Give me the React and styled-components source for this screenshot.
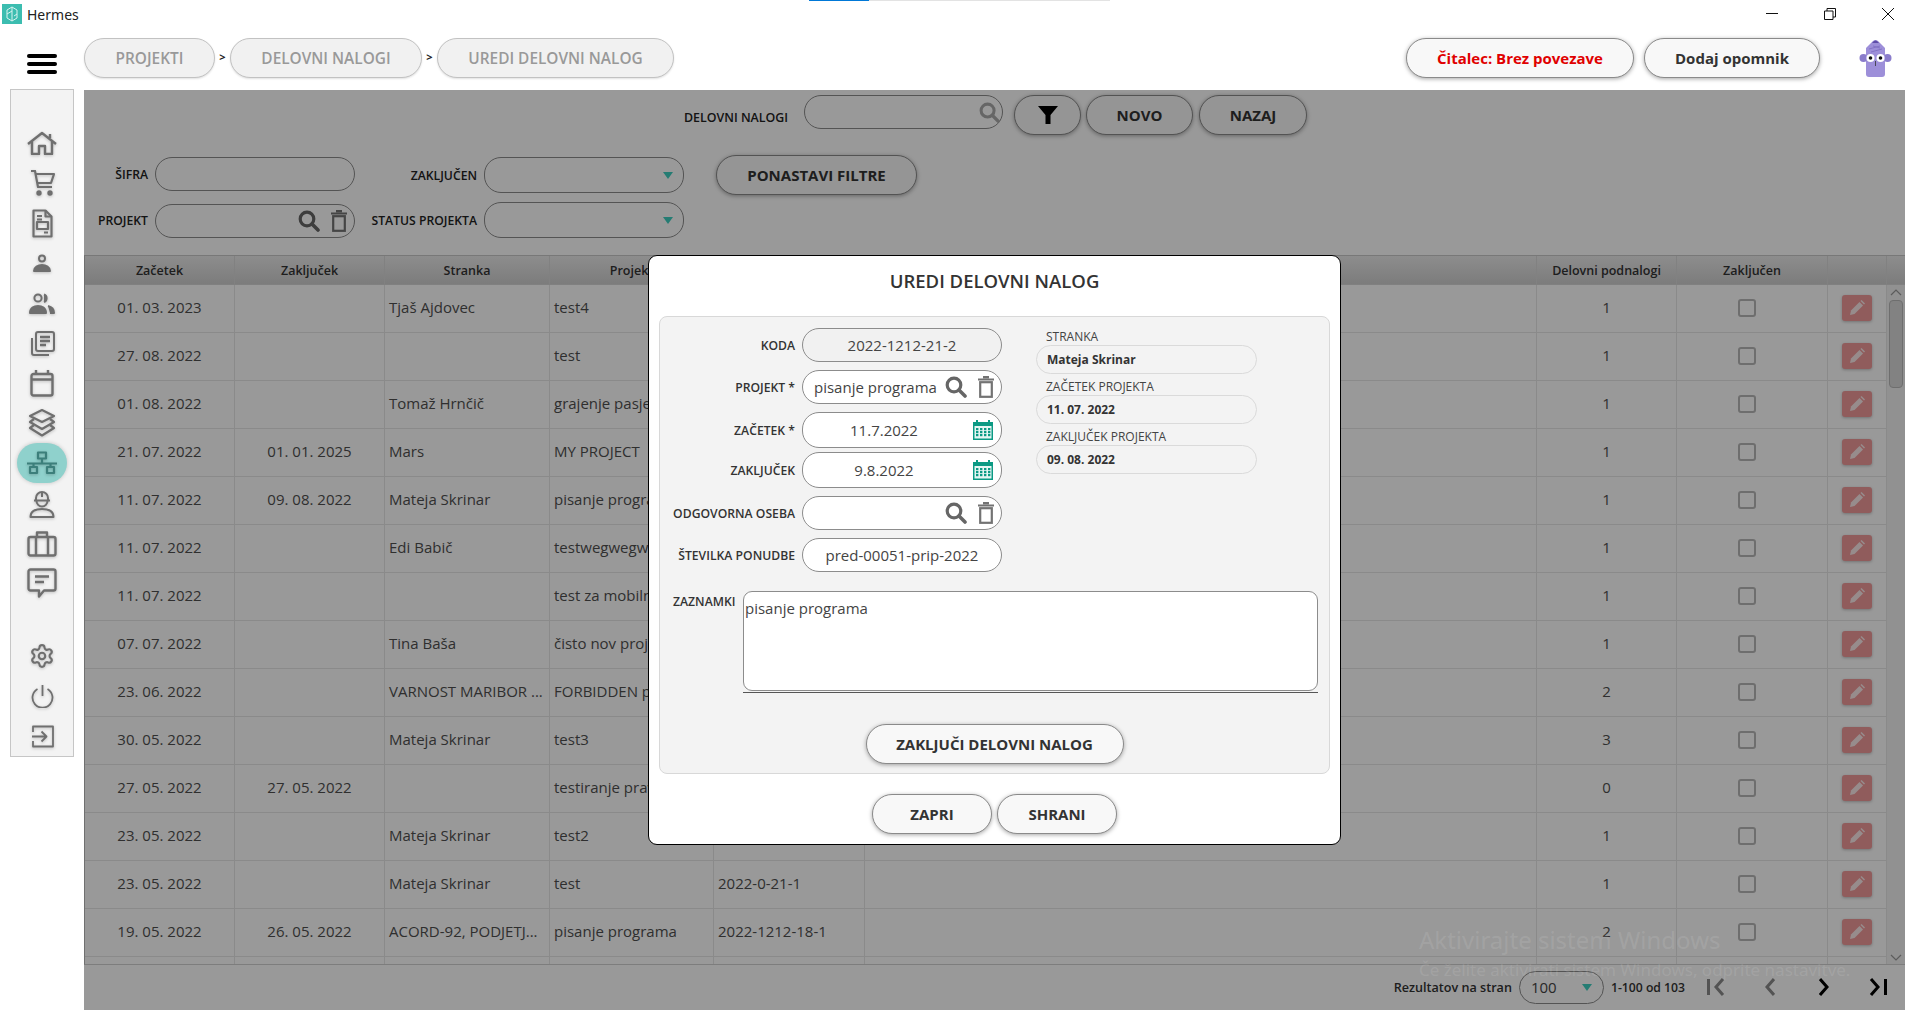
import React from 'react';
import styled, { createGlobalStyle } from 'styled-components';
import { Settings } from 'lucide-react';

const GlobalStyle = createGlobalStyle`
  html, body { margin: 0; padding: 0; background: #fff; }
  body { font-family: "Open Sans", "Noto Sans", sans-serif; color: #444; }
  * { box-sizing: border-box; }
`;

const COLS = '150px 150px 165px 164px 151px 672px 140px 151px 59px';

const rows = [
  ['01. 03. 2023', '', 'Tjaš Ajdovec', 'test4', '', 1],
  ['27. 08. 2022', '', '', 'test', '', 1],
  ['01. 08. 2022', '', 'Tomaž Hrnčič', 'grajenje pasje hiše', '', 1],
  ['21. 07. 2022', '01. 01. 2025', 'Mars', 'MY PROJECT', '', 1],
  ['11. 07. 2022', '09. 08. 2022', 'Mateja Skrinar', 'pisanje programa', '', 1],
  ['11. 07. 2022', '', 'Edi Babič', 'testwegwegwg', '', 1],
  ['11. 07. 2022', '', '', 'test za mobilno', '', 1],
  ['07. 07. 2022', '', 'Tina Baša', 'čisto nov projekt', '', 1],
  ['23. 06. 2022', '', 'VARNOST MARIBOR ...', 'FORBIDDEN project', '', 2],
  ['30. 05. 2022', '', 'Mateja Skrinar', 'test3', '', 3],
  ['27. 05. 2022', '27. 05. 2022', '', 'testiranje prava', '', 0],
  ['23. 05. 2022', '', 'Mateja Skrinar', 'test2', '', 1],
  ['23. 05. 2022', '', 'Mateja Skrinar', 'test', '2022-0-21-1', 1],
  ['19. 05. 2022', '26. 05. 2022', 'ACORD-92, PODJETJ...', 'pisanje programa', '2022-1212-18-1', 2],
  ['', '', '', '', '', ''],
];

const Page = styled.div`
  position: relative;
  width: 1920px;
  height: 1030px;
  overflow: hidden;
`;

const LoadBar = styled.div`
  position: absolute;
  top: 0;
  left: 809px;
  width: 301px;
  height: 1px;
  background: #e3e3e3;
  &::before {
    content: '';
    display: block;
    width: 60px;
    height: 1px;
    background: #0078d7;
  }
`;

const TitleBar = styled.div`
  display: flex;
  align-items: center;
  height: 30px;
  padding: 0 0 2px 2px;
`;

const AppName = styled.span`
  margin-left: 5px;
  font-family: "Noto Sans", sans-serif;
  font-size: 14px;
  color: #222;
`;

const WindowControls = styled.div`
  display: flex;
  margin-left: auto;
  margin-right: 26px;
  gap: 46px;
  svg { display: block; }
`;

const TopBar = styled.div`
  display: flex;
  align-items: flex-start;
  height: 60px;
  padding: 8px 28px 0 27px;
`;

const Burger = styled.div`
  display: flex;
  flex-direction: column;
  gap: 4px;
  width: 30px;
  margin: 16px 27px 0 0;
  span {
    height: 4px;
    border-radius: 2px;
    background: #000;
  }
`;

const Crumb = styled.div`
  display: flex;
  align-items: center;
  justify-content: center;
  width: ${p => p.$w}px;
  height: 40px;
  padding-top: 1px;
  border: 1px solid #c2c2c2;
  border-radius: 20px;
  background: #f1f1f1;
  color: #999;
  font-size: 15.4px;
  font-weight: 600;
  box-shadow: 0 1px 2px rgba(0, 0, 0, .12);
`;

const CrumbSep = styled.div`
  width: 15px;
  height: 40px;
  line-height: 37px;
  text-align: center;
  font-size: 11px;
  font-weight: 700;
  color: #222;
`;

const RightActions = styled.div`
  display: flex;
  gap: 10px;
  margin-left: auto;
`;

const PillButton = styled.button`
  display: flex;
  align-items: center;
  justify-content: center;
  width: ${p => p.$w}px;
  height: ${p => p.$h || 40}px;
  margin-left: ${p => p.$ml || 0}px;
  padding: 0;
  border: 1px solid #8a8a8a;
  border-radius: 20px;
  background: #f8f8f8;
  font-family: inherit;
  font-size: 15px;
  font-weight: 700;
  color: ${p => p.$color || '#333'};
  white-space: nowrap;
  box-shadow: 0 1px 4px rgba(0, 0, 0, .35);
`;

const Avatar = styled.div`
  width: 33px;
  height: 38px;
  margin: 1px 0 0 39px;
  svg { display: block; }
`;

const Main = styled.div`
  display: flex;
  align-items: flex-start;
  padding-left: 10px;
`;

const Sidebar = styled.nav`
  display: flex;
  flex-direction: column;
  align-items: center;
  width: 64px;
  height: 668px;
  margin: -1px 10px 0 0;
  padding-top: 33px;
  border: 1px solid #c6c6c6;
  background: #f3f3f3;
`;

const NavItem = styled.div`
  display: flex;
  align-items: center;
  justify-content: center;
  flex: none;
  width: 50px;
  height: 40px;
  border-radius: 20px;
  color: ${p => (p.$active ? '#3c7f7b' : '#6f6f6f')};
  background: ${p => (p.$active ? '#8fd1cc' : 'transparent')};
  box-shadow: ${p => (p.$active ? '0 0 4px rgba(0,0,0,.2)' : 'none')};
  svg {
    display: block;
    filter: drop-shadow(0 1px 1.5px rgba(0, 0, 0, .22));
  }
`;

const NavGap = styled.div`
  flex: none;
  height: 33px;
`;

const Panel = styled.main`
  position: relative;
  display: flex;
  flex-direction: column;
  width: 1821px;
  height: 920px;
  background: #fff;
`;

const SearchRow = styled.div`
  display: flex;
  justify-content: center;
  align-items: flex-start;
  height: 67px;
  padding: 5px 0 0 2px;
`;

const SearchLabel = styled.label`
  margin: 14px 16px 0 0;
  font-size: 12.4px;
  font-weight: 600;
  color: #222;
`;

const InputShell = styled.div`
  display: flex;
  align-items: center;
  flex: none;
  width: ${p => (p.$w ? `${p.$w}px` : '100%')};
  height: ${p => p.$h || 34}px;
  padding-right: ${p => p.$pr ?? 6}px;
  border: 1px solid #8c8c8c;
  border-radius: 17px;
  background: ${p => p.$bg || '#fff'};
  align-self: ${p => p.$self || 'auto'};
  svg { display: block; flex: none; }
`;

const Value = styled.input`
  flex: 1;
  width: 0;
  min-width: 0;
  height: 100%;
  padding: 0 ${p => p.$pr ?? 0}px 0 ${p => p.$pl ?? 10}px;
  border: 0;
  outline: 0;
  background: transparent;
  font-family: inherit;
  font-size: 15px;
  color: #444;
  text-align: ${p => (p.$center ? 'center' : 'left')};
`;

const IconGap = styled.span`
  flex: none;
  width: ${p => p.$w}px;
`;

const Caret = styled.div`
  flex: none;
  width: 0;
  height: 0;
  margin-left: auto;
  border-left: 5px solid transparent;
  border-right: 5px solid transparent;
  border-top: 7px solid #3fcfc0;
`;

const FilterGrid = styled.div`
  display: grid;
  grid-template-columns: 64px 200px 115px 200px auto;
  grid-template-rows: 36px 36px;
  column-gap: 7px;
  row-gap: 9px;
  height: 98px;
`;

const FilterLabel = styled.label`
  align-self: center;
  margin-top: ${p => p.$mt || 0}px;
  text-align: right;
  font-size: 12.2px;
  font-weight: 600;
  color: #222;
  white-space: nowrap;
`;

const ResetButton = styled(PillButton)`
  margin: -2px 0 0 25px;
`;

const Table = styled.div`
  display: flex;
  flex-direction: column;
  height: 710px;
  border-left: 1px solid #bbb;
  border-bottom: 1px solid #d0d0d0;
  border-top: 1px solid #c8c8c8;
`;

const HeadRow = styled.div`
  display: grid;
  grid-template-columns: ${COLS} 1fr;
  flex: none;
  height: 29px;
  border-bottom: 1px solid #d6d6d6;
  background: linear-gradient(#ebebeb, #cfcfcf);
`;

const HeadCell = styled.div`
  display: flex;
  align-items: center;
  justify-content: center;
  border-right: 1px solid #d8d8d8;
  font-size: 12.5px;
  font-weight: 600;
  color: #333;
  &:last-child { border-right: 0; }
`;

const TableBody = styled.div`
  display: flex;
  flex: 1;
  min-height: 0;
`;

const RowList = styled.div`
  width: 1802px;
  overflow: hidden;
`;

const Row = styled.div`
  display: grid;
  grid-template-columns: ${COLS};
  height: 48px;
  border-bottom: 1px solid #e6e6e6;
`;

const Cell = styled.div`
  display: flex;
  align-items: center;
  justify-content: ${p => (p.$center ? 'center' : 'flex-start')};
  padding: ${p => (p.$center ? '0 0 4px' : '0 0 4px 4px')};
  border-right: 1px solid #e6e6e6;
  font-size: 15px;
  color: #4f4f4f;
  white-space: nowrap;
  overflow: hidden;
`;

const Check = styled.span`
  width: 18px;
  height: 18px;
  margin: 2px 10px 0 0;
  border: 2px solid #b8b8b8;
  border-radius: 3px;
  background: #fff;
`;

const EditButton = styled.span`
  display: flex;
  align-items: center;
  justify-content: center;
  width: 30px;
  height: 26px;
  margin-top: 2px;
  border-radius: 3px;
  background: #f09a9a;
  box-shadow: 0 1px 3px rgba(0, 0, 0, .25);
`;

const Scrollbar = styled.div`
  display: flex;
  flex-direction: column;
  align-items: center;
  flex: 1;
  padding: 3px 1px 2px 1px;
  background: #f2f2f2;
  svg { display: block; flex: none; }
`;

const ScrollThumb = styled.div`
  width: 14px;
  height: 88px;
  margin: 4px 0 auto;
  border: 1px solid #b8b8b8;
  border-radius: 4px;
  background: #d9d9d9;
`;

const Footer = styled.div`
  display: flex;
  align-items: center;
  justify-content: flex-end;
  flex: 1;
  padding-bottom: 1px;
`;

const FooterText = styled.span`
  margin-right: ${p => p.$mr || 0}px;
  font-size: ${p => p.$size || 12.2}px;
  font-weight: 600;
  color: #333;
  white-space: nowrap;
`;

const PageSize = styled(InputShell)`
  margin: 0 7px;
  padding: 0 11px;
  font-size: 15px;
  color: #444;
`;

const PageButton = styled.span`
  display: flex;
  align-items: center;
  justify-content: center;
  width: 54px;
  height: 30px;
  svg { display: block; }
`;

const Dim = styled.div`
  position: absolute;
  inset: 0;
  display: flex;
  align-items: center;
  justify-content: center;
  background: rgba(0, 0, 0, .4);
`;

const Modal = styled.div`
  display: flex;
  flex-direction: column;
  align-items: center;
  width: 693px;
  height: 590px;
  border: 1px solid #000;
  border-radius: 9px;
  background: #fff;
`;

const ModalTitle = styled.h2`
  margin: 0;
  height: 60px;
  line-height: 50px;
  font-size: 18.500px;
  font-weight: 600;
  color: #333;
`;

const ModalBox = styled.div`
  display: flex;
  flex-direction: column;
  width: 671px;
  height: 458px;
  padding-top: 11px;
  border: 1px solid #d8d8d8;
  border-radius: 8px;
  background: #f3f3f3;
`;

const FormTop = styled.div`
  display: flex;
  height: 263px;
`;

const FormColumn = styled.div`
  display: flex;
  flex-direction: column;
  width: 342px;
`;

const FieldRow = styled.div`
  display: flex;
  align-items: center;
  justify-content: flex-end;
  gap: 7px;
  margin-top: ${p => p.$mt || 0}px;
`;

const FieldLabel = styled.label`
  font-size: 12.2px;
  font-weight: 600;
  color: #333;
  white-space: nowrap;
`;

const InfoColumn = styled.div`
  display: flex;
  flex-direction: column;
  width: 221px;
  margin: 1px 0 0 34px;
`;

const InfoLabel = styled.div`
  height: 15px;
  padding-left: 10px;
  line-height: 15px;
  font-size: 12px;
  color: #444;
  white-space: nowrap;
`;

const InfoValue = styled.div`
  display: flex;
  align-items: center;
  height: 29px;
  margin: 1px 0 5px;
  padding-left: 10px;
  border: 1px solid #dadada;
  border-radius: 15px;
  font-size: 12px;
  font-weight: 700;
  color: #333;
`;

const NotesRow = styled.div`
  display: flex;
  align-items: flex-start;
  gap: 6px;
  padding-left: 13px;
`;

const NotesLabel = styled(FieldLabel)`
  margin-top: 2px;
  width: 64px;
`;

const NotesField = styled.div`
  width: 575px;
  padding-bottom: 1px;
  border-bottom: 1px solid #555;
`;

const Notes = styled.textarea`
  display: block;
  width: 100%;
  height: 100px;
  padding: 6px 1px;
  border: 1px solid #8c8c8c;
  border-radius: 9px;
  outline: 0;
  resize: none;
  background: #fff;
  font-family: inherit;
  font-size: 15px;
  color: #444;
`;

const FinishRow = styled.div`
  display: flex;
  justify-content: center;
  margin-top: 31px;
`;

const ModalActions = styled.div`
  display: flex;
  gap: 5px;
  margin-top: 20px;
`;

const Watermark = styled.div`
  position: absolute;
  left: 1419px;
  top: 922px;
  color: rgba(255, 255, 255, .11);
  pointer-events: none;
  white-space: nowrap;
  font-family: "Noto Sans", sans-serif;
`;

const WatermarkTitle = styled.div`
  font-size: 24px;
  line-height: 36px;
`;

const WatermarkText = styled.div`
  font-size: 17px;
  line-height: 23px;
`;

const Search = ({ size = 22, color = '#666' }) => (
  <svg width={size} height={size} viewBox="0 0 22 22" fill="none" stroke={color}>
    <circle cx="9" cy="9" r="6.8" strokeWidth="3.2" />
    <path d="M14 14l6 6" strokeWidth="3.6" strokeLinecap="round" />
  </svg>
);

const Trash = ({ color = '#737373' }) => (
  <svg width="18" height="22" viewBox="0 0 18 22" fill="none" stroke={color}>
    <path d="M1 3.5h16M6 1.2h6" strokeWidth="2.2" />
    <rect x="3.2" y="6.2" width="11.6" height="14.6" strokeWidth="2.2" />
  </svg>
);

const CalendarIcon = () => (
  <svg width="20" height="20" viewBox="0 0 20 20" style={{ marginRight: 2 }}>
    <path d="M0 2h3V0h2v2h10V0h2v2h3v18H0z" fill="#0c9a84" />
    <rect x="1.5" y="6" width="17" height="12.5" fill="#e6f6f3" />
    {[3, 7, 11, 15].map(x => [8, 11, 14].map(y => (
      <rect key={`${x}-${y}`} x={x} y={y} width="2.4" height="2.2" fill="#0c9a84" />
    )))}
  </svg>
);

const Logo = () => (
  <svg width="20" height="20" viewBox="0 0 20 20">
    <rect width="20" height="20" fill="#3cbdb0" />
    <path d="M10 3l5 3v8l-5 3-5-3V6zM10 3v14M5 10l5-3M15 10l-3 2" fill="none" stroke="#d8f3f0" strokeWidth="1" />
  </svg>
);

const AvatarArt = () => (
  <svg width="33" height="38" viewBox="0 0 33 38">
    <circle cx="4.5" cy="19" r="4" fill="#8a7ccb" />
    <circle cx="28.5" cy="19" r="4" fill="#8a7ccb" />
    <path d="M7 9l7-7q2.500-2 5 0l7 7v26a3 3 0 0 1-3 3H10a3 3 0 0 1-3-3z" fill="#9d8fd9" />
    <path d="M13 4l2-2q1.500-1 3 0l2 2z" fill="#5f4ea8" />
    <path d="M10 10l11-3M12 13l11-3M14 7l7 2" stroke="#7c6cc0" strokeWidth=".8" fill="none" />
    <circle cx="11.5" cy="19" r="4" fill="#fff" />
    <circle cx="21.5" cy="19" r="4" fill="#fff" />
    <circle cx="11.5" cy="19" r="1.8" fill="#111" />
    <circle cx="21.5" cy="19" r="1.8" fill="#111" />
    <path d="M16.500 22v5" stroke="#333" strokeWidth=".8" />
  </svg>
);

const Pencil = () => (
  <svg width="16" height="16" viewBox="0 0 16 16" fill="#fff" opacity=".8">
    <path d="M1 15l1-4.500L10.500 2l3.500 3.500L5.500 14z" />
    <path d="M11.500 1l1-1 3.500 3.500-1 1z" />
  </svg>
);

const Stroke = ({ w, h, sw = 2, children }) => (
  <svg width={w} height={h} viewBox={`0 0 ${w} ${h}`} fill="none" stroke="currentColor" strokeWidth={sw} strokeLinejoin="round">
    {children}
  </svg>
);

const navTop = [
  <Stroke w={30} h={24} sw={2.4}><path d="M1 13L15 2l14 11M5 10v13h7v-8h6v8h7V10M23 3v4" /></Stroke>,
  <Stroke w={25} h={26} sw={2.2}><path d="M1 1h4l3 16h14M5.500 4H24l-3 9H8" /><circle cx="9" cy="23" r="1.6" fill="currentColor" /><circle cx="20" cy="23" r="1.6" fill="currentColor" /></Stroke>,
  <Stroke w={21} h={29} sw={2.2}><path d="M1.500 1.500h12l6 6v20h-18z" /><path d="M13.500 1.500v6h6M5 7h5M5 10.500h5M16 23.500h-4" /><rect x="5" y="13" width="11" height="7" /></Stroke>,
  <Stroke w={18} h={18} sw={2}><circle cx="9" cy="4.5" r="3" /><path d="M1 17c0-4 4-6 8-6s8 2 8 6z" fill="currentColor" /></Stroke>,
  <Stroke w={26} h={22} sw={2}><circle cx="9" cy="6" r="3.6" /><path d="M1 21c0-5 4-7 8-7s8 2 8 7z" fill="currentColor" /><path d="M15 2.500a4 4 0 0 1 0 7.500M19 14c4 1 6 3 6 7h-4" fill="currentColor" /></Stroke>,
  <Stroke w={25} h={25} sw={2}><path d="M2 7v15a2 2 0 0 0 2 2h15" /><rect x="6" y="1" width="18" height="19" rx="2" /><path d="M10 6h10M10 10h10M10 14h6" strokeWidth="2.4" /></Stroke>,
  <Stroke w={24} h={28} sw={2.4}><rect x="1.5" y="5" width="21" height="21.5" rx="2" /><path d="M1.500 10.500h21M6 1v5M18 1v5" /></Stroke>,
  <Stroke w={30} h={30} sw={2.2}><path d="M15 2l12 6-12 6L3 8z" /><path d="M7 11l-4 3 12 7 12-7-4-3" /><path d="M7 17l-4 3 12 7.500L27 20l-4-3" /></Stroke>,
  <Stroke w={30} h={24} sw={2.2}><rect x="11" y="1.5" width="8" height="6" /><rect x="3" y="16" width="7" height="6" /><rect x="20" y="16" width="7" height="6" /><path d="M15 8v4M0 12.500h30M6.500 12.500V16M23.500 12.500V16" /></Stroke>,
  <Stroke w={26} h={29} sw={2}><path d="M7 11V9a6 6 0 0 1 12 0v2M5 11.500h16M13 3v5" /><path d="M7.500 12a5.500 5.500 0 0 0 11 0" /><path d="M1.500 28c0-6 5-8 11.500-8s11.500 2 11.500 8z" /></Stroke>,
  <Stroke w={30} h={27} sw={2.4}><rect x="1.5" y="7" width="27" height="18.5" rx="2" /><path d="M10 7V2.500h10V7M9 7v18.500M21 7v18.500" /></Stroke>,
  <Stroke w={30} h={30} sw={2.4}><path d="M3.500 1.500h23a2 2 0 0 1 2 2v17a2 2 0 0 1-2 2H17l-5 6v-6H3.500a2 2 0 0 1-2-2v-17a2 2 0 0 1 2-2z" /><path d="M8 8.500h14M8 14h9" /></Stroke>,
];

const navBottom = [
  <Settings size={26} strokeWidth={2} />,
  <Stroke w={23} h={23} sw={1.8}><path d="M6.500 4a10 10 0 1 0 10 0M11.500 0v11" /></Stroke>,
  <Stroke w={23} h={23} sw={1.8}><path d="M2 7V1.500h20v20H2V16M1 11.500h14M10.500 6.500l5 5-5 5" /></Stroke>,
];

const Chevron = ({ d, color = '#000', w = 18 }) => (
  <svg width={w} height="18" viewBox={`0 0 ${w} 18`} fill="none" stroke={color} strokeWidth="3">
    <path d={d} />
  </svg>
);

const App = () => (
  <Page>
    <GlobalStyle />
    <LoadBar />
    <TitleBar>
      <Logo />
      <AppName>Hermes</AppName>
      <WindowControls>
        <svg width="12" height="12" viewBox="0 0 12 12" stroke="#111" fill="none"><path d="M0 5.500h12" /></svg>
        <svg width="12" height="12" viewBox="0 0 12 12" stroke="#111" fill="none"><path d="M.5 3h8.500v8.500H.5zM3 3V.5h8.500V9H9" /></svg>
        <svg width="12" height="12" viewBox="0 0 12 12" stroke="#111" fill="none"><path d="M0 0l12 12M12 0L0 12" /></svg>
      </WindowControls>
    </TitleBar>

    <TopBar>
      <Burger><span /><span /><span /></Burger>
      <Crumb $w={131}>PROJEKTI</Crumb>
      <CrumbSep>&gt;</CrumbSep>
      <Crumb $w={192}>DELOVNI NALOGI</Crumb>
      <CrumbSep>&gt;</CrumbSep>
      <Crumb $w={237}>UREDI DELOVNI NALOG</Crumb>
      <RightActions>
        <PillButton $w={228} $color="#e00000">Čitalec: Brez povezave</PillButton>
        <PillButton $w={176}>Dodaj opomnik</PillButton>
      </RightActions>
      <Avatar><AvatarArt /></Avatar>
    </TopBar>

    <Main>
      <Sidebar>
        {navTop.map((icon, i) => <NavItem key={i} $active={i === 8}>{icon}</NavItem>)}
        <NavGap />
        {navBottom.map((icon, i) => <NavItem key={i}>{icon}</NavItem>)}
      </Sidebar>

      <Panel>
        <SearchRow>
          <SearchLabel>DELOVNI NALOGI</SearchLabel>
          <InputShell $w={199} $pr={2}>
            <Value readOnly />
            <Search size={21} color="#aaa" />
          </InputShell>
          <PillButton $w={67} $ml={11}>
            <svg width="20" height="18" viewBox="0 0 20 18"><path d="M0 0h20l-7.500 9v9h-5V9z" fill="#000" /></svg>
          </PillButton>
          <PillButton $w={107} $ml={5}>NOVO</PillButton>
          <PillButton $w={108} $ml={6}>NAZAJ</PillButton>
        </SearchRow>

        <FilterGrid>
          <FilterLabel $mt={-2}>ŠIFRA</FilterLabel>
          <InputShell $self="start"><Value readOnly /></InputShell>
          <FilterLabel>ZAKLJUČEN</FilterLabel>
          <InputShell $h={36} $pr={10}><Caret /></InputShell>
          <ResetButton $w={201}>PONASTAVI FILTRE</ResetButton>
          <FilterLabel>PROJEKT</FilterLabel>
          <InputShell $self="end">
            <Value readOnly />
            <Search />
            <IconGap $w={10} />
            <Trash />
          </InputShell>
          <FilterLabel>STATUS PROJEKTA</FilterLabel>
          <InputShell $h={36} $pr={10}><Caret /></InputShell>
        </FilterGrid>

        <Table>
          <HeadRow>
            <HeadCell>Začetek</HeadCell>
            <HeadCell>Zaključek</HeadCell>
            <HeadCell>Stranka</HeadCell>
            <HeadCell>Projekt</HeadCell>
            <HeadCell>Koda</HeadCell>
            <HeadCell />
            <HeadCell>Delovni podnalogi</HeadCell>
            <HeadCell>Zaključen</HeadCell>
            <HeadCell />
            <HeadCell />
          </HeadRow>
          <TableBody>
            <RowList>
              {rows.map((r, i) => (
                <Row key={i}>
                  <Cell $center>{r[0]}</Cell>
                  <Cell $center>{r[1]}</Cell>
                  <Cell>{r[2]}</Cell>
                  <Cell>{r[3]}</Cell>
                  <Cell>{r[4]}</Cell>
                  <Cell />
                  <Cell $center>{r[5]}</Cell>
                  <Cell $center>{r[0] && <Check />}</Cell>
                  <Cell $center>{r[0] && <EditButton><Pencil /></EditButton>}</Cell>
                </Row>
              ))}
            </RowList>
            <Scrollbar>
              <svg width="12" height="8" viewBox="0 0 12 8" fill="none" stroke="#999" strokeWidth="1.2"><path d="M1 7l5-5 5 5" /></svg>
              <ScrollThumb />
              <svg width="12" height="8" viewBox="0 0 12 8" fill="none" stroke="#999" strokeWidth="1.2"><path d="M1 1l5 5 5-5" /></svg>
            </Scrollbar>
          </TableBody>
        </Table>

        <Footer>
          <FooterText $size={12.6}>Rezultatov na stran</FooterText>
          <PageSize $w={85} $h={33}>100<Caret /></PageSize>
          <FooterText $mr={4}>1-100 od 103</FooterText>
          <PageButton><Chevron w={18} color="#8a8a8a" d="M1.500 1v16M16 1l-7 8 7 8" /></PageButton>
          <PageButton><Chevron w={10} color="#8a8a8a" d="M9 1L2 9l7 8" /></PageButton>
          <PageButton><Chevron w={10} d="M1 1l7 8-7 8" /></PageButton>
          <PageButton><Chevron w={18} d="M2 1l7 8-7 8M16.500 1v16" /></PageButton>
        </Footer>

        <Dim>
          <Modal>
            <ModalTitle>UREDI DELOVNI NALOG</ModalTitle>
            <ModalBox>
              <FormTop>
                <FormColumn>
                  <FieldRow>
                    <FieldLabel>KODA</FieldLabel>
                    <InputShell $w={200} $pr={0} $bg="#f1f1f1"><Value readOnly $center $pl={0} value="2022-1212-21-2" /></InputShell>
                  </FieldRow>
                  <FieldRow $mt={8}>
                    <FieldLabel>PROJEKT *</FieldLabel>
                    <InputShell $w={200}>
                      <Value readOnly $pl={11} value="pisanje programa" />
                      <Search />
                      <IconGap $w={10} />
                      <Trash />
                    </InputShell>
                  </FieldRow>
                  <FieldRow $mt={8}>
                    <FieldLabel>ZAČETEK *</FieldLabel>
                    <InputShell $w={200} $h={36}>
                      <Value readOnly $center $pl={0} $pr={8} value="11.7.2022" />
                      <CalendarIcon />
                    </InputShell>
                  </FieldRow>
                  <FieldRow $mt={4}>
                    <FieldLabel>ZAKLJUČEK</FieldLabel>
                    <InputShell $w={200} $h={36}>
                      <Value readOnly $center $pl={0} $pr={8} value="9.8.2022" />
                      <CalendarIcon />
                    </InputShell>
                  </FieldRow>
                  <FieldRow $mt={8}>
                    <FieldLabel>ODGOVORNA OSEBA</FieldLabel>
                    <InputShell $w={200}>
                      <Value readOnly />
                      <Search />
                      <IconGap $w={10} />
                      <Trash />
                    </InputShell>
                  </FieldRow>
                  <FieldRow $mt={8}>
                    <FieldLabel>ŠTEVILKA PONUDBE</FieldLabel>
                    <InputShell $w={200} $pr={0}><Value readOnly $center $pl={0} value="pred-00051-prip-2022" /></InputShell>
                  </FieldRow>
                </FormColumn>
                <InfoColumn>
                  <InfoLabel>STRANKA</InfoLabel>
                  <InfoValue>Mateja Skrinar</InfoValue>
                  <InfoLabel>ZAČETEK PROJEKTA</InfoLabel>
                  <InfoValue>11. 07. 2022</InfoValue>
                  <InfoLabel>ZAKLJUČEK PROJEKTA</InfoLabel>
                  <InfoValue>09. 08. 2022</InfoValue>
                </InfoColumn>
              </FormTop>
              <NotesRow>
                <NotesLabel>ZAZNAMKI</NotesLabel>
                <NotesField><Notes readOnly value="pisanje programa" /></NotesField>
              </NotesRow>
              <FinishRow>
                <PillButton $w={258}>ZAKLJUČI DELOVNI NALOG</PillButton>
              </FinishRow>
            </ModalBox>
            <ModalActions>
              <PillButton $w={120}>ZAPRI</PillButton>
              <PillButton $w={120}>SHRANI</PillButton>
            </ModalActions>
          </Modal>
        </Dim>
      </Panel>
    </Main>

    <Watermark>
      <WatermarkTitle>Aktivirajte sistem Windows</WatermarkTitle>
      <WatermarkText>Če želite aktivirati sistem Windows, odprite nastavitve.</WatermarkText>
    </Watermark>
  </Page>
);

export default App;
